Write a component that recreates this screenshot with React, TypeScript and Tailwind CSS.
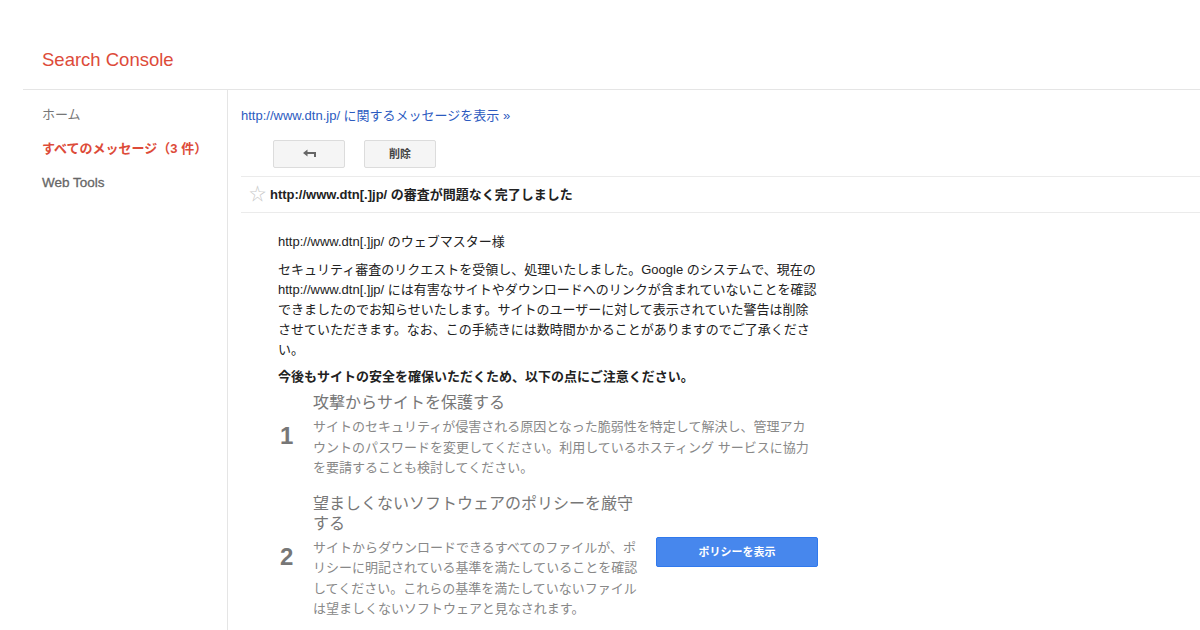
import React from 'react';

const font = { fontFamily: '"Liberation Sans", Arial, "Noto Sans CJK JP", sans-serif' };

function Step({ n, title, children, action }: { n: string; title: string; children: React.ReactNode; action?: React.ReactNode }) {
  return (
    <div className="flex items-center">
      <div className="w-[35px] pl-[2px] text-[24px] font-bold text-[#777]">{n}</div>
      <div className={action ? 'w-[330px]' : 'w-[505px]'}>
        <div className="text-[16px] leading-[20px] text-[#777]">{title}</div>
        <div className="mt-[4px] text-[13px] leading-[20.5px] text-[#888]">{children}</div>
      </div>
      {action}
    </div>
  );
}

export default function App() {
  return (
    <div className="w-[1200px] h-[630px] overflow-hidden bg-white text-[#222]" style={font}>
      {/* header */}
      <div className="ml-[23px] h-[90px] border-b border-[#e5e5e5] pl-[19px] pt-[48px]">
        <div className="text-[18.5px] leading-[23px] text-[#dd4b39]">Search Console</div>
      </div>

      <div className="flex h-[540px]">
        {/* sidebar */}
        <div className="ml-[23px] w-[205px] shrink-0 border-r border-[#e5e5e5] pl-[19px] pt-[16px] text-[13px]">
          <div className="h-[18px] leading-[18px] text-[#777]">ホーム</div>
          <div className="mt-[16px] h-[18px] leading-[18px] font-bold text-[#dd4b39]">すべてのメッセージ（3 件）</div>
          <div className="mt-[16px] h-[18px] leading-[18px] text-[13.5px] text-[#666] [-webkit-text-stroke:0.3px_#666]">Web Tools</div>
        </div>

        {/* main */}
        <div className="flex-1 pl-[13px] text-[13px]">
          <div className="pt-[17px] leading-[18px] text-[#2c5bbf]">http://www.dtn.jp/ に関するメッセージを表示 »</div>
          <div className="mt-[15px] flex gap-[19px] pl-[32px]">
            <div className="flex h-[28px] w-[72px] items-center justify-center rounded-[2px] border border-[#dcdcdc] bg-[#f5f5f5]">
              <svg width="15" height="10" viewBox="0 0 15 10">
                <path d="M1 4 L5.5 0.5 V3 H14 V8 H12 V5 H5.5 V7.5 Z" fill="#666" />
              </svg>
            </div>
            <div className="flex h-[28px] w-[72px] items-center justify-center rounded-[2px] border border-[#dcdcdc] bg-[#f5f5f5] text-[11px] font-bold text-[#444]">
              削除
            </div>
          </div>

          <div className="mt-[8px] flex h-[37px] items-center border-y border-[#ebebeb] pl-[8px]">
            <span className="text-[17px] leading-none text-[#c8c8c8]">☆</span>
            <span className="ml-[4px] font-bold text-[#222]">http://www.dtn[.]jp/ の審査が問題なく完了しました</span>
          </div>

          <div className="w-[578px] pl-[37px] pt-[19px]">
            <div className="leading-[20px]">http://www.dtn[.]jp/ のウェブマスター様</div>
            <p className="mt-[8px] leading-[20px]">
              セキュリティ審査のリクエストを受領し、処理いたしました。Google のシステムで、現在の http://www.dtn[.]jp/ には有害なサイトやダウンロードへのリンクが含まれていないことを確認できましたのでお知らせいたします。サイトのユーザーに対して表示されていた警告は削除させていただきます。なお、この手続きには数時間かかることがありますのでご了承ください。
            </p>
            <p className="mt-[7px] font-bold leading-[20px]">今後もサイトの安全を確保いただくため、以下の点にご注意ください。</p>

            <div className="mt-[6px] flex flex-col gap-[15px]">
              <Step n="1" title="攻撃からサイトを保護する">
                サイトのセキュリティが侵害される原因となった脆弱性を特定して解決し、管理アカウントのパスワードを変更してください。利用しているホスティング サービスに協力を要請することも検討してください。
              </Step>
              <Step
                n="2"
                title="望ましくないソフトウェアのポリシーを厳守する"
                action={
                  <div className="mb-[9px] ml-[13px] flex h-[30px] w-[162px] items-center justify-center rounded-[2px] border border-[#3079ed] bg-[#4787ed] text-[11px] font-bold text-white">
                    ポリシーを表示
                  </div>
                }
              >
                サイトからダウンロードできるすべてのファイルが、ポリシーに明記されている基準を満たしていることを確認してください。これらの基準を満たしていないファイルは望ましくないソフトウェアと見なされます。
              </Step>
            </div>
          </div>
        </div>
      </div>
    </div>
  );
}
